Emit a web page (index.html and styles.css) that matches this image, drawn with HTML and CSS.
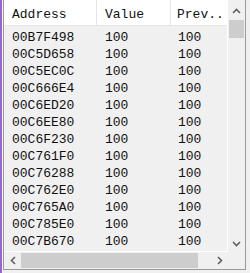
FILE: index.html
```html
<!DOCTYPE html>
<html lang="en">
<head>
    <meta charset="UTF-8">
    <meta name="viewport" content="width=device-width, initial-scale=1.0">
    <title>Found addresses</title>
    <link rel="stylesheet" href="styles.css">
</head>
<body>
    <div class="edge"></div>
    <div class="edge-light"></div>
    <div class="frame">
        <div class="list">
            <div class="list-head">
                <div class="col col-addr">Address</div>
                <div class="col col-val">Value</div>
                <div class="col col-prev">Prev..</div>
            </div>
            <div class="list-body">
                <div class="row"><span>00B7F498</span><span>100</span><span>100</span></div>
                <div class="row"><span>00C5D658</span><span>100</span><span>100</span></div>
                <div class="row"><span>00C5EC0C</span><span>100</span><span>100</span></div>
                <div class="row"><span>00C666E4</span><span>100</span><span>100</span></div>
                <div class="row"><span>00C6ED20</span><span>100</span><span>100</span></div>
                <div class="row"><span>00C6EE80</span><span>100</span><span>100</span></div>
                <div class="row"><span>00C6F230</span><span>100</span><span>100</span></div>
                <div class="row"><span>00C761F0</span><span>100</span><span>100</span></div>
                <div class="row"><span>00C76288</span><span>100</span><span>100</span></div>
                <div class="row"><span>00C762E0</span><span>100</span><span>100</span></div>
                <div class="row"><span>00C765A0</span><span>100</span><span>100</span></div>
                <div class="row"><span>00C785E0</span><span>100</span><span>100</span></div>
                <div class="row"><span>00C7B670</span><span>100</span><span>100</span></div>
            </div>
        </div>

        <!-- vertical scrollbar -->
        <div class="vscroll">
            <div class="btn btn-up">
                <svg width="9" height="6" viewBox="0 0 9 6"><polyline points="1,5 4.5,1.5 8,5" /></svg>
            </div>
            <div class="vthumb"></div>
            <div class="track"></div>
            <div class="btn btn-down">
                <svg width="9" height="6" viewBox="0 0 9 6"><polyline points="1,1 4.5,4.5 8,1" /></svg>
            </div>
        </div>

        <!-- horizontal scrollbar -->
        <div class="hscroll">
            <div class="btn btn-left">
                <svg width="6" height="9" viewBox="0 0 6 9"><polyline points="5,1 1.5,4.5 5,8" /></svg>
            </div>
            <div class="hthumb"></div>
            <div class="track"></div>
            <div class="btn btn-right">
                <svg width="6" height="9" viewBox="0 0 6 9"><polyline points="1,1 4.5,4.5 1,8" /></svg>
            </div>
        </div>
        <div class="corner"></div>
    </div>
</body>
</html>
```

FILE: styles.css
```css
/* list view with windows style scrollbars */
body {
    margin: 0;
    padding: 0;
    width: 250px;
    height: 273px;
    display: flex;
    align-items: flex-start;
    background-color: #f0f0f0;
    font-family: "Liberation Mono", "DejaVu Sans Mono", monospace;
    font-size: 13px;
    color: #111;
    overflow: hidden;
}
.edge {
    width: 2px;
    height: 273px;
    background-color: #9467cf;
}
.edge-light {
    width: 1px;
    height: 273px;
    background-color: #fbfbfb;
}
.frame {
    width: 243px;
    height: 270px;
    box-sizing: border-box;
    border: 1px solid #9a9a9a;
    border-top: none;
    display: grid;
    grid-template-columns: 1fr 17px;
    grid-template-rows: 1fr 17px;
}
.list {
    background-color: #f0f0f0;
    border-right: 1px solid #fff;
    border-bottom: 1px solid #fff;
    overflow: hidden;
}
.list-head {
    display: grid;
    grid-template-columns: 93px 74px 1fr;
    height: 25px;
    background-color: #fff;
    border-bottom: 1px solid #e5e5e5;
}
.col {
    padding: 6px 0 0 8px;
    line-height: 17px;
    white-space: nowrap;
}
.col-addr,
.col-val {
    border-right: 1px solid #e5e5e5;
}
.col-prev {
    padding-left: 6px;
}
.list-body {
    padding-top: 3px;
}
.row {
    display: grid;
    grid-template-columns: 93px 74px 1fr;
    height: 17px;
    line-height: 17px;
}
.row span {
    padding-left: 8px;
    white-space: nowrap;
}
.row span:nth-child(3) {
    padding-left: 7px;
}
.vscroll {
    display: flex;
    flex-direction: column;
    background-color: #f0f0f0;
}
.hscroll {
    display: flex;
    background-color: #f0f0f0;
}
.track {
    flex: 1;
}
.btn {
    display: flex;
    align-items: center;
    justify-content: center;
    flex-shrink: 0;
}
.btn svg polyline {
    fill: none;
    stroke: #606060;
    stroke-width: 1.6;
}
.btn-up {
    height: 20px;
    align-items: flex-end;
    padding-bottom: 6px;
    box-sizing: border-box;
}
.btn-down {
    height: 17px;
}
.btn-left,
.btn-right {
    width: 17px;
}
.vthumb {
    height: 18px;
    margin: 0 1px;
    background-color: #cdcdcd;
}
.hthumb {
    width: 177px;
    margin: 1px 0;
    background-color: #cdcdcd;
}
.corner {
    background-color: #f0f0f0;
}
```
